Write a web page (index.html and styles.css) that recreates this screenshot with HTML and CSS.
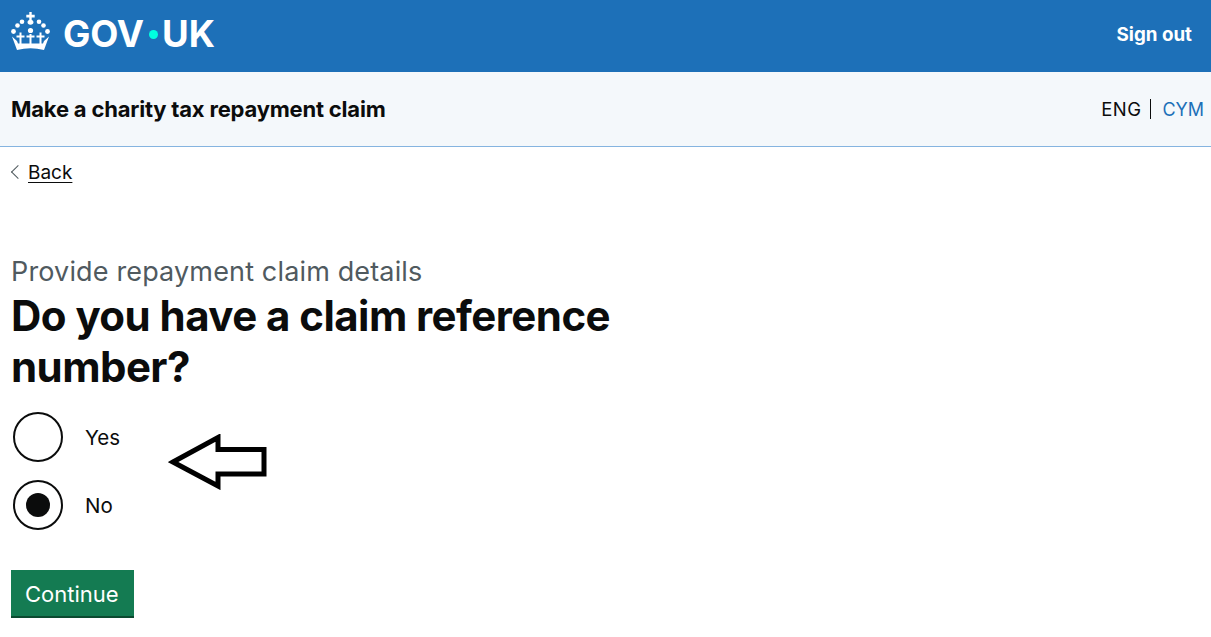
FILE: index.html
```html
<!DOCTYPE html>
<html lang="en">
<head>
    <meta charset="UTF-8">
    <title>Do you have a claim reference number?</title>
    <link rel="stylesheet" href="styles.css">
</head>
<body>

<header class="top-bar">
    <a class="logo" href="#">
        <svg class="crown" width="40" height="38" viewBox="0 0 40 38" fill="#fff">
            <!-- top cross and orb -->
            <path d="M18.300 0h2.400v2.800h3V5.400h-3V8c1.100.4 1.800 1.200 1.800 2.300 0 1.400-1.200 2.500-3 2.500s-3-1.100-3-2.500c0-1.100.7-1.900 1.800-2.300V5.400h-3V2.800h3z"/>
            <circle cx="11" cy="9.800" r="2.300"/>
            <circle cx="28" cy="9.800" r="2.300"/>
            <circle cx="6.500" cy="13.500" r="2.300"/>
            <circle cx="32.500" cy="13.500" r="2.300"/>
            <circle cx="2.500" cy="19.500" r="2.400"/>
            <circle cx="36.500" cy="19.500" r="2.400"/>
            <circle cx="19.500" cy="18.500" r="2.600"/>
            <!-- three small crosses on the band -->
            <path d="M8.500 20.500h2v3h3v2h-3V33h-2v-7.500h-3v-2h3z"/>
            <path d="M18.500 22h2v1.500h3v2h-3V33h-2v-7.500h-3v-2h3z"/>
            <path d="M28.500 20.500h2v3h3v2h-3V33h-2v-7.500h-3v-2h3z"/>
            <!-- band -->
            <path d="M1 24.500l5 4.500 1 2.500h25l1-2.500 5-4.500-5 13.500q-13.500-3.600-27 0z"/>
        </svg>
        <span class="logo-text">GOV<span class="logo-dot"></span>UK</span>
    </a>
    <a class="sign-out" href="#">Sign out</a>
</header>

<div class="service-bar">
    <span class="service-name">Make a charity tax repayment claim</span>
    <div class="lang-toggle">
        <span class="lang-current">ENG</span>
        <a class="lang-link" href="#">CYM</a>
    </div>
</div>

<main class="content">
    <a class="back-link" href="#">Back</a>

    <form class="claim-form">
        <span class="caption">Provide repayment claim details</span>
        <h1>Do you have a claim reference number?</h1>

        <div class="radios">
            <label class="radio">
                <input type="radio" name="hasReference" value="yes">
                <span class="radio-mark"></span>
                <span class="radio-label">Yes</span>
            </label>
            <label class="radio">
                <input type="radio" name="hasReference" value="no" checked>
                <span class="radio-mark"></span>
                <span class="radio-label">No</span>
            </label>
        </div>

        <button type="submit">Continue</button>
    </form>

    <svg class="pointer" width="100" height="56" viewBox="0 0 100 56">
        <path d="M5 28 50 3.500v12h46V40H50v12z" fill="none" stroke="#000" stroke-width="5"/>
    </svg>
</main>

</body>
</html>
```

FILE: styles.css
```css
body {
    font-family: Inter, "Noto Sans", Arial, sans-serif;
    margin: 0;
    padding: 0;
    background-color: #fff;
    color: #0b0c0c;
}

a {
    color: inherit;
}

.top-bar {
    height: 72px;
    box-sizing: border-box;
    background-color: #1d70b8;
    color: #fff;
    display: flex;
    justify-content: space-between;
    align-items: center;
    padding: 0 19px 4px 11px;
}

.logo {
    display: flex;
    align-items: center;
    gap: 12px;
    text-decoration: none;
}

.crown {
    margin-bottom: 6px;
}

.logo-text {
    display: flex;
    align-items: center;
    font-size: 36.500px;
    font-weight: 700;
    letter-spacing: -0.1px;
}

.logo-dot {
    width: 9px;
    height: 9px;
    margin: 0 4px 0 5px;
    border-radius: 50%;
    background-color: #00ffe0;
}

.sign-out {
    font-size: 18.800px;
    font-weight: 700;
    text-decoration: none;
}

.service-bar {
    height: 75px;
    box-sizing: border-box;
    background-color: #f4f8fb;
    border-bottom: 1px solid #85b4e0;
    display: flex;
    justify-content: space-between;
    align-items: center;
    padding: 0 7px 0 11px;
}

.service-name {
    font-size: 22px;
    font-weight: 700;
    letter-spacing: -0.2px;
}

.lang-toggle {
    display: flex;
    align-items: center;
    font-size: 18.500px;
}

.lang-current {
    padding-right: 9px;
    line-height: 20px;
    letter-spacing: 0.4px;
    border-right: 1px solid #0b0c0c;
}

.lang-link {
    padding-left: 11px;
    font-size: 18px;
    color: #1d70b8;
    text-decoration: none;
}

.content {
    position: relative;
    padding: 15px 11px 0;
}

.back-link {
    display: inline-block;
    position: relative;
    margin-left: 17px;
    font-size: 19px;
    line-height: 22px;
    text-underline-offset: 3px;
}

.back-link::before {
    content: "";
    position: absolute;
    left: -15px;
    top: 5px;
    width: 9px;
    height: 9px;
    border-left: 1px solid #505a5f;
    border-bottom: 1px solid #505a5f;
    transform: rotate(45deg);
}

.claim-form {
    margin-top: 73px;
    width: 640px;
}

.caption {
    display: block;
    font-size: 27px;
    line-height: 30px;
    letter-spacing: 0.15px;
    color: #505a5f;
}

h1 {
    margin: 3px 0 20px;
    font-size: 42px;
    line-height: 51px;
    font-weight: 700;
    letter-spacing: -0.55px;
}

.radios {
    display: flex;
    flex-direction: column;
    gap: 18px;
}

.radio {
    display: flex;
    align-items: center;
    gap: 22px;
    height: 50px;
    padding-left: 2px;
    font-size: 20.500px;
}

.radio input {
    position: absolute;
    opacity: 0;
}

.radio-mark {
    width: 50px;
    height: 50px;
    box-sizing: border-box;
    border: 2px solid #0b0c0c;
    border-radius: 50%;
    display: flex;
    align-items: center;
    justify-content: center;
}

.radio input:checked + .radio-mark::after {
    content: "";
    width: 24px;
    height: 24px;
    border-radius: 50%;
    background-color: #0b0c0c;
}

button {
    display: block;
    margin-top: 40px;
    padding: 9px 15px 7px 14px;
    font-family: inherit;
    font-size: 22px;
    line-height: 30px;
    color: #fff;
    background-color: #147b52;
    border: none;
    border-bottom: 2px solid #0b4a30;
    cursor: pointer;
}

.pointer {
    position: absolute;
    left: 168px;
    top: 287px;
}
```
